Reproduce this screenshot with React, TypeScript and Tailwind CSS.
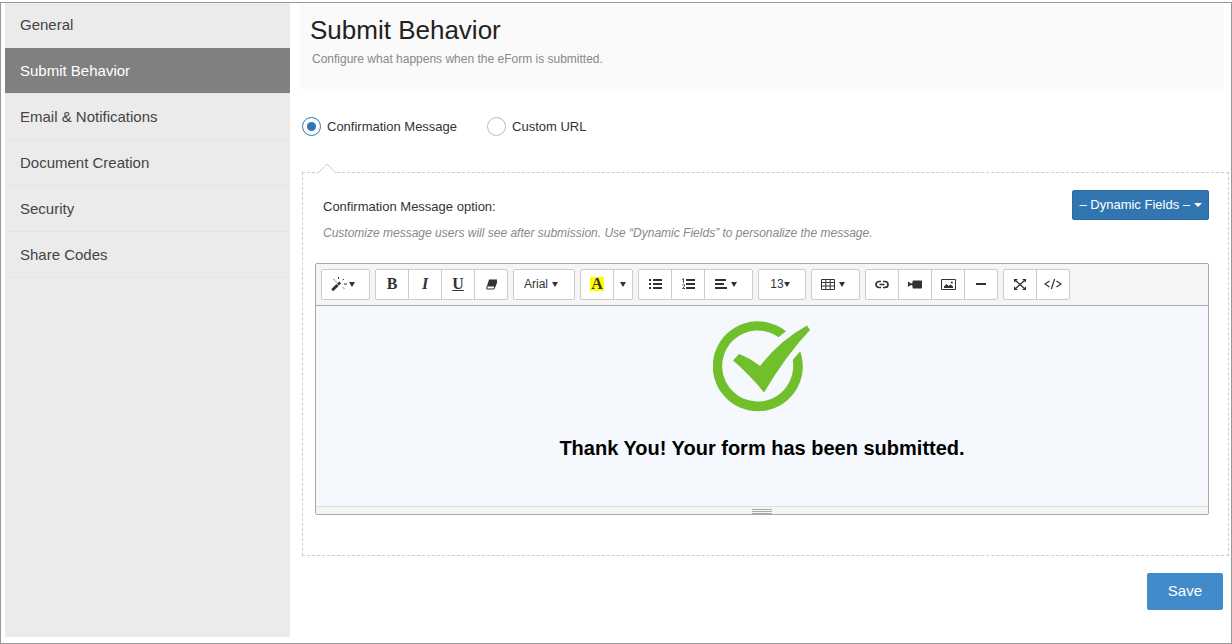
import React, { useState } from "react";

const menuItems = [
  "General",
  "Submit Behavior",
  "Email & Notifications",
  "Document Creation",
  "Security",
  "Share Codes",
];

const Caret = () => (
  <svg width="6" height="5" viewBox="0 0 6 5" className="shrink-0" aria-hidden="true">
    <path d="M0 0h6L3 5z" fill="currentColor" />
  </svg>
);

const WandIcon = () => (
  <svg width="18" height="16" viewBox="0 0 18 16" className="shrink-0" aria-hidden="true">
    <path d="M1.2 14.3L6.6 9" stroke="currentColor" strokeWidth="3" />
    <path d="M7 8.6L9.2 6.4" stroke="currentColor" strokeWidth="2.6" />
    <path
      d="M7.5 1v2M2.5 3.2l1.2 1M13 3l-1.2 1.2M13 8h3M12 11.5l1.2 1.2M4.5 5.5l1 .6"
      stroke="currentColor"
      strokeWidth="1"
    />
  </svg>
);

const EraserIcon = () => (
  <svg width="11" height="11" viewBox="0 0 11 11" aria-hidden="true">
    <path d="M3 0.5h7.6L8.6 7H1z" fill="currentColor" />
    <path
      d="M1.2 7L0.8 10h7.2L10.4 4V0.8L8.6 7z"
      fill="none"
      stroke="currentColor"
      strokeWidth="1"
    />
    <path d="M8.2 7.2L10.6 1.5v2.6L8 10z" fill="currentColor" />
  </svg>
);

const BulletsIcon = () => (
  <svg width="13" height="11" viewBox="0 0 13 11" fill="currentColor" aria-hidden="true">
    <path d="M0 0h2v2H0zM0 4h2v2H0zM0 8h2v2H0zM4 0h9v2H4zM4 4h9v2H4zM4 8h9v2H4z" />
  </svg>
);

const NumbersIcon = () => (
  <svg width="13" height="12" viewBox="0 0 13 12" aria-hidden="true">
    <path d="M4 1h9v2H4zM4 5h9v2H4zM4 9h9v2H4z" fill="currentColor" />
    <path
      d="M0.3 1.5L1.5 0.6V4.8M0.3 7.2Q1.5 5.6 2.6 7Q2.8 8 0.6 10.5H3"
      fill="none"
      stroke="currentColor"
      strokeWidth="0.9"
    />
  </svg>
);

const AlignIcon = () => (
  <svg width="12" height="10" viewBox="0 0 12 10" fill="currentColor" aria-hidden="true">
    <path d="M0 0h11v2H0zM0 4h9v2H0zM0 8h12v2H0z" />
  </svg>
);

const TableIcon = () => (
  <svg width="14" height="11" viewBox="0 0 14 11" aria-hidden="true">
    <path
      d="M0.5 0.5h13v10h-13zM0.5 3.5h13M0.5 7h13M4.8 0.5v10M9.2 0.5v10"
      fill="none"
      stroke="currentColor"
    />
  </svg>
);

const LinkIcon = () => (
  <svg width="14" height="9" viewBox="0 0 14 9" aria-hidden="true">
    <path
      d="M6 7.5H4A3 3 0 0 1 4 1.5H6M8 1.5H10A3 3 0 0 1 10 7.5H8M4.5 4.5H9.5"
      fill="none"
      stroke="currentColor"
      strokeWidth="1.7"
    />
  </svg>
);

const VideoIcon = () => (
  <svg width="14" height="9" viewBox="0 0 14 9" fill="currentColor" aria-hidden="true">
    <path d="M0 1.5L3 3.5L4.5 3V1.5Q4.5 0.5 5.5 0.5H13Q14 0.5 14 1.5V7.5Q14 8.5 13 8.5H5.5Q4.5 8.5 4.5 7.5V5.5L3 5L0 7z" />
  </svg>
);

const PictureIcon = () => (
  <svg width="15" height="11" viewBox="0 0 15 11" aria-hidden="true">
    <path d="M0.5 0.5h14v10h-14z" fill="none" stroke="currentColor" />
    <path d="M3 9V7.5L5.5 5L7.5 7L9.5 5.5L12 7.5V9z" fill="currentColor" />
    <circle cx="10.8" cy="3.5" r="1.1" fill="currentColor" />
  </svg>
);

const RuleIcon = () => (
  <svg width="10" height="2" viewBox="0 0 10 2" aria-hidden="true">
    <path d="M0 0h10v2H0z" fill="currentColor" />
  </svg>
);

const ExpandIcon = () => (
  <svg width="12" height="11" viewBox="0 0 12 11" aria-hidden="true">
    <path d="M1.5 1.5l9 8M10.5 1.5l-9 8" stroke="currentColor" strokeWidth="1.3" />
    <path
      d="M0 0h4L0 3.6zM12 0H8l4 3.6zM0 11h4L0 7.4zM12 11H8l4-3.6z"
      fill="currentColor"
    />
  </svg>
);

const CodeIcon = () => (
  <svg width="18" height="12" viewBox="0 0 18 12" aria-hidden="true">
    <path
      d="M5.5 3L1 6l4.5 3M12.5 3L17 6l-4.5 3M10.6 1L7.4 11"
      fill="none"
      stroke="currentColor"
      strokeWidth="1.2"
    />
  </svg>
);

const CheckLogo = () => (
  <svg width="98" height="92" viewBox="1 0 98 92" role="img" aria-label="Success">
    <path
      d="M74 10.2A45 45 0 1 0 88.2 30.2L80.7 39A35.5 35.5 0 1 1 66.5 16.2z"
      fill="#71bf2a"
    />
    <path
      d="M21 39.5L27 33Q38 37 48 45Q67 20 95 4.5L98 9Q75 33 52 71.5Q38 54 21 39.5z"
      fill="#71bf2a"
    />
  </svg>
);

const ToolGroup = ({ children }: { children: React.ReactNode }) => (
  <div className="flex h-[31px] divide-x divide-[#ccc] overflow-hidden rounded-xs border border-[#ccc] bg-white">
    {children}
  </div>
);

type ToolProps = {
  label: string;
  width?: string;
  children: React.ReactNode;
};

const Tool = ({ label, width = "w-[33px]", children }: ToolProps) => (
  <button
    type="button"
    aria-label={label}
    title={label}
    className={`flex items-center justify-center text-[#333] hover:bg-gray-100 ${width}`}
  >
    {children}
  </button>
);

const Toolbar = () => (
  <div className="flex flex-wrap gap-[5px] border-b border-[#a9a9a9] bg-[#f5f5f5] p-[5px]">
    <ToolGroup>
      <Tool label="Style" width="w-[47px] pr-1.5">
        <WandIcon />
        <Caret />
      </Tool>
    </ToolGroup>
    <ToolGroup>
      <Tool label="Bold">
        <span className="font-['Liberation_Serif',serif] text-base font-bold">B</span>
      </Tool>
      <Tool label="Italic">
        <span className="font-['Liberation_Serif',serif] text-base font-bold italic">I</span>
      </Tool>
      <Tool label="Underline">
        <span className="font-['Liberation_Serif',serif] text-base font-bold underline">U</span>
      </Tool>
      <Tool label="Remove Font Style" width="w-[32px]">
        <EraserIcon />
      </Tool>
    </ToolGroup>
    <ToolGroup>
      <Tool label="Font Family" width="w-[60px] gap-1 pr-1.5 text-xs">
        Arial
        <Caret />
      </Tool>
    </ToolGroup>
    <ToolGroup>
      <Tool label="Recent Color">
        <span className="bg-[#ff0] px-px font-['Liberation_Serif',serif] text-base leading-[14px] font-bold">
          A
        </span>
      </Tool>
      <Tool label="More Color" width="w-[18px]">
        <Caret />
      </Tool>
    </ToolGroup>
    <ToolGroup>
      <Tool label="Unordered list">
        <BulletsIcon />
      </Tool>
      <Tool label="Ordered list">
        <NumbersIcon />
      </Tool>
      <Tool label="Paragraph" width="w-[47px] gap-1 pr-1.5">
        <AlignIcon />
        <Caret />
      </Tool>
    </ToolGroup>
    <ToolGroup>
      <Tool label="Font Size" width="w-[46px] pr-1 text-xs">
        13
        <Caret />
      </Tool>
    </ToolGroup>
    <ToolGroup>
      <Tool label="Table" width="w-[47px] gap-1 pr-1.5">
        <TableIcon />
        <Caret />
      </Tool>
    </ToolGroup>
    <ToolGroup>
      <Tool label="Link">
        <LinkIcon />
      </Tool>
      <Tool label="Video">
        <VideoIcon />
      </Tool>
      <Tool label="Picture">
        <PictureIcon />
      </Tool>
      <Tool label="Horizontal Rule" width="w-[32px]">
        <RuleIcon />
      </Tool>
    </ToolGroup>
    <ToolGroup>
      <Tool label="Full Screen">
        <ExpandIcon />
      </Tool>
      <Tool label="Code View" width="w-[32px]">
        <CodeIcon />
      </Tool>
    </ToolGroup>
  </div>
);

type RadioProps = {
  label: string;
  value: string;
  current: string;
  onSelect: (value: string) => void;
};

const Radio = ({ label, value, current, onSelect }: RadioProps) => (
  <label className="flex items-center gap-1.5 text-[13px] text-[#333]">
    <input
      type="radio"
      name="behavior"
      value={value}
      checked={current === value}
      onChange={() => onSelect(value)}
      className="grid size-[19px] appearance-none place-content-center rounded-full border border-[#bbb] bg-white before:size-[9px] before:rounded-full checked:border-[#3276b1] checked:before:bg-[#3276b1]"
    />
    {label}
  </label>
);

const App = () => {
  const [active, setActive] = useState("Submit Behavior");
  const [behavior, setBehavior] = useState("message");

  return (
    <div className="flex min-h-screen flex-col bg-white pt-0.5 font-['Liberation_Sans',Arial,sans-serif]">
      <div className="flex grow gap-2.5 border border-[#999] pl-1">
        <nav className="mb-1.5 w-[285px] shrink-0 bg-[#ebebeb]">
          {menuItems.map((item) => (
            <a
              key={item}
              href="#"
              onClick={(e) => {
                e.preventDefault();
                setActive(item);
              }}
              className={`flex h-[46px] items-center border-b border-[#e5e5e5] bg-clip-padding px-[15px] pt-0.5 text-[15px] first:h-[45px] first:border-b-0 first:pt-0 ${
                active === item ? "bg-[#808080] text-white" : "text-[#444]"
              }`}
            >
              {item}
            </a>
          ))}
        </nav>

        <main className="min-w-0 grow">
          <header className="mr-[7px] h-[86px] bg-[#fafafa] px-2.5 pt-2.5">
            <h1 className="text-[26px] leading-[34px] text-[#222]">Submit Behavior</h1>
            <p className="px-0.5 pt-1 text-xs leading-4 text-[#888]">
              Configure what happens when the eForm is submitted.
            </p>
          </header>

          <div className="flex gap-[30px] pt-7 pl-0.5">
            <Radio
              label="Confirmation Message"
              value="message"
              current={behavior}
              onSelect={setBehavior}
            />
            <Radio
              label="Custom URL"
              value="url"
              current={behavior}
              onSelect={setBehavior}
            />
          </div>

          <section className="relative mx-0.5 mt-[35px] border border-dashed border-[#ccc] pt-[17px] pr-[19px] pb-10 pl-3">
            <svg
              width="20"
              height="11"
              viewBox="0 0 20 11"
              className="absolute -top-[10px] left-3.5"
              aria-hidden="true"
            >
              <path d="M0.5 10.5L10 1L19.5 10.5" fill="#fff" stroke="#ccc" />
            </svg>

            <div className="flex items-start justify-between pl-2">
              <div>
                <h2 className="pt-[9px] text-[13px] leading-4 text-[#333]">
                  Confirmation Message option:
                </h2>
                <p className="pt-2.5 text-xs leading-4 text-[#888] italic">
                  Customize message users will see after submission. Use “Dynamic Fields” to
                  personalize the message.
                </p>
              </div>
              <button
                type="button"
                className="flex h-[30px] items-center gap-1 rounded-xs border border-[#2c699d] bg-[#3276b1] px-1.5 text-[13px] text-white"
              >
                – Dynamic Fields –
                <svg width="8" height="4" viewBox="0 0 8 4" aria-hidden="true">
                  <path d="M0 0h8L4 4z" fill="currentColor" />
                </svg>
              </button>
            </div>

            <div className="mt-[22px] rounded-xs border border-[#a9a9a9]">
              <Toolbar />
              <div className="flex h-[200px] flex-col items-center bg-[#f5f9fe] pt-[15px]">
                <CheckLogo />
                <p className="pt-[21px] text-xl leading-7 font-bold text-black">
                  Thank You! Your form has been submitted.
                </p>
              </div>
              <div className="flex h-2 flex-col items-center gap-px border-t border-[#ddd] bg-[#f5f5f5] pt-0.5">
                <span className="h-px w-5 bg-[#a9a9a9]" />
                <span className="h-px w-5 bg-[#a9a9a9]" />
                <span className="h-px w-5 bg-[#a9a9a9]" />
              </div>
            </div>
          </section>

          <div className="flex justify-end pt-[17px] pr-2">
            <button
              type="button"
              className="h-[37px] rounded-xs bg-[#428bca] px-[21px] text-[15px] text-white"
            >
              Save
            </button>
          </div>
        </main>
      </div>
    </div>
  );
};

export default App;
